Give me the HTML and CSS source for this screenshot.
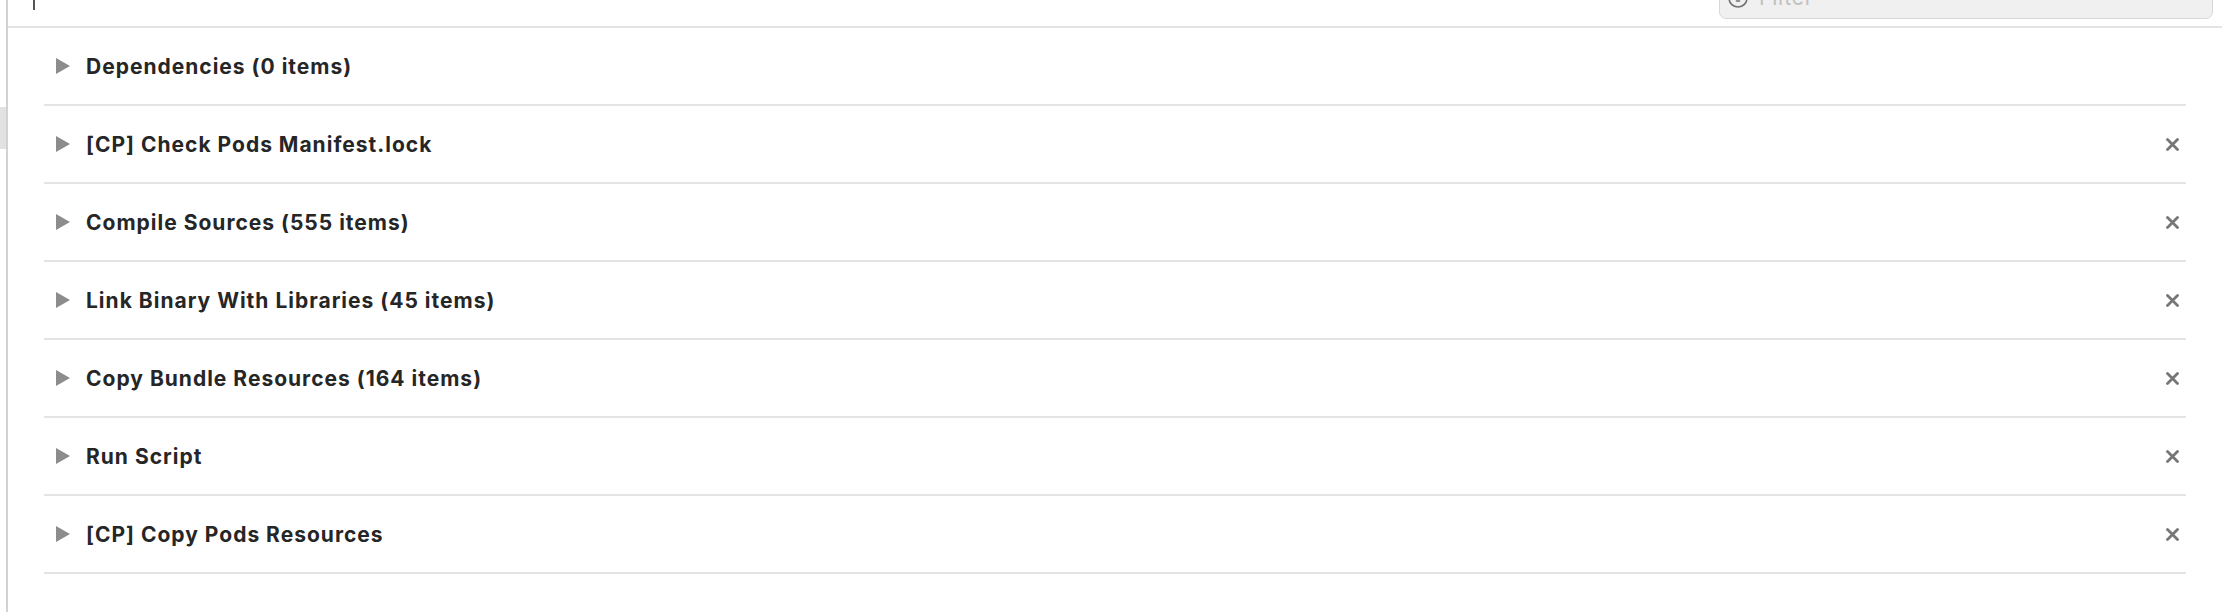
FILE: index.html
```html
<!DOCTYPE html>
<html>
<head>
<meta charset="utf-8">
<link rel="stylesheet" href="styles.css">
</head>
<body>
<div class="app">
  <div class="side">
    <div class="side-block"></div>
  </div>
  <div class="divider"></div>
  <div class="main">
    <div class="header">
      <div class="cursor"></div>
      <div class="filter">
        <svg class="filter-icon" width="20" height="20" viewBox="0 0 20 20"><circle cx="10" cy="10" r="9" fill="none" stroke="#6e6e6e" stroke-width="1.6"/><path d="M5.5 7h9M7 10h6M8.5 13h3" stroke="#6e6e6e" stroke-width="1.6" stroke-linecap="round"/></svg>
        <span class="filter-text">Filter</span>
      </div>
    </div>
    <div class="list">
      <div class="row">
        <svg class="tri" width="14" height="16" viewBox="0 0 14 16"><path d="M0 0L14 8L0 16Z" fill="#8c8c8c"/></svg>
        <span class="label">Dependencies (0 items)</span>
      </div>
      <div class="row">
        <svg class="tri" width="14" height="16" viewBox="0 0 14 16"><path d="M0 0L14 8L0 16Z" fill="#8c8c8c"/></svg>
        <span class="label">[CP] Check Pods Manifest.lock</span>
        <svg class="close" width="13" height="13" viewBox="0 0 13 13"><path d="M1.5 1.5L11.5 11.5M11.5 1.5L1.5 11.5" stroke="#767676" stroke-width="2.8" stroke-linecap="round"/></svg>
      </div>
      <div class="row">
        <svg class="tri" width="14" height="16" viewBox="0 0 14 16"><path d="M0 0L14 8L0 16Z" fill="#8c8c8c"/></svg>
        <span class="label">Compile Sources (555 items)</span>
        <svg class="close" width="13" height="13" viewBox="0 0 13 13"><path d="M1.5 1.5L11.5 11.5M11.5 1.5L1.5 11.5" stroke="#767676" stroke-width="2.8" stroke-linecap="round"/></svg>
      </div>
      <div class="row">
        <svg class="tri" width="14" height="16" viewBox="0 0 14 16"><path d="M0 0L14 8L0 16Z" fill="#8c8c8c"/></svg>
        <span class="label">Link Binary With Libraries (45 items)</span>
        <svg class="close" width="13" height="13" viewBox="0 0 13 13"><path d="M1.5 1.5L11.5 11.5M11.5 1.5L1.5 11.5" stroke="#767676" stroke-width="2.8" stroke-linecap="round"/></svg>
      </div>
      <div class="row">
        <svg class="tri" width="14" height="16" viewBox="0 0 14 16"><path d="M0 0L14 8L0 16Z" fill="#8c8c8c"/></svg>
        <span class="label">Copy Bundle Resources (164 items)</span>
        <svg class="close" width="13" height="13" viewBox="0 0 13 13"><path d="M1.5 1.5L11.5 11.5M11.5 1.5L1.5 11.5" stroke="#767676" stroke-width="2.8" stroke-linecap="round"/></svg>
      </div>
      <div class="row">
        <svg class="tri" width="14" height="16" viewBox="0 0 14 16"><path d="M0 0L14 8L0 16Z" fill="#8c8c8c"/></svg>
        <span class="label">Run Script</span>
        <svg class="close" width="13" height="13" viewBox="0 0 13 13"><path d="M1.5 1.5L11.5 11.5M11.5 1.5L1.5 11.5" stroke="#767676" stroke-width="2.8" stroke-linecap="round"/></svg>
      </div>
      <div class="row">
        <svg class="tri" width="14" height="16" viewBox="0 0 14 16"><path d="M0 0L14 8L0 16Z" fill="#8c8c8c"/></svg>
        <span class="label">[CP] Copy Pods Resources</span>
        <svg class="close" width="13" height="13" viewBox="0 0 13 13"><path d="M1.5 1.5L11.5 11.5M11.5 1.5L1.5 11.5" stroke="#767676" stroke-width="2.8" stroke-linecap="round"/></svg>
      </div>
    </div>
  </div>
</div>
</body>
</html>
```
FILE: styles.css
```css
html, body {
  margin: 0;
  padding: 0;
  background: #ffffff;
}
body {
  width: 2222px;
  height: 612px;
  overflow: hidden;
  font-family: Inter, "Liberation Sans", sans-serif;
}
.app {
  display: flex;
  height: 612px;
}
.side {
  width: 6px;
  display: flex;
  flex-direction: column;
}
.side-block {
  margin-top: 107px;
  height: 42px;
  background: #e2e2e2;
}
.divider {
  width: 2px;
  background: #d2d2d2;
}
.main {
  flex: 1;
  display: flex;
  flex-direction: column;
}
.header {
  height: 26px;
  border-bottom: 2px solid #e4e4e4;
  display: flex;
  align-items: flex-start;
  justify-content: space-between;
  overflow: hidden;
  padding: 0 9px 0 25px;
}
.cursor {
  width: 2px;
  height: 10px;
  background: #555555;
}
.filter {
  width: 494px;
  height: 40px;
  margin-top: -21px;
  box-sizing: border-box;
  border: 1px solid #d8d8d8;
  border-radius: 7px;
  background: #f0f0f0;
  display: flex;
  align-items: center;
  gap: 11px;
  padding-left: 8px;
}
.filter-icon {
  flex: none;
  margin-top: -2px;
}
.filter-text {
  font-size: 21px;
  color: #c0c0c0;
  margin-top: -4px;
  letter-spacing: 0.8px;
}
.list {
  display: flex;
  flex-direction: column;
  padding: 0 36px;
}
.row {
  height: 76px;
  border-bottom: 2px solid #e4e4e4;
  display: flex;
  align-items: center;
  padding: 0 7px 0 12px;
}
.tri {
  flex: none;
}
.label {
  margin-left: 16px;
  font-size: 21px;
  font-weight: 700;
  color: #262626;
  flex: 1;
  letter-spacing: 1px;
}
.close {
  flex: none;
}
```
